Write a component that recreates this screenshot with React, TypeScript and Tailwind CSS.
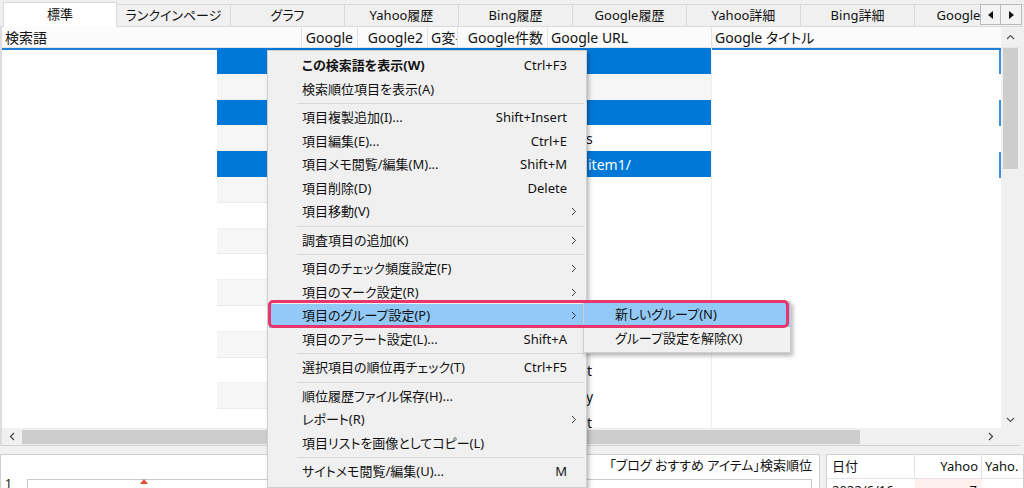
import React from 'react';

type MenuEntry =
  | { label: string; shortcut?: string; sub?: boolean; bold?: boolean; active?: boolean }
  | 'sep';

const tabs: string[] = [
  '標準', 'ランクインページ', 'グラフ', 'Yahoo履歴', 'Bing履歴',
  'Google履歴', 'Yahoo詳細', 'Bing詳細', 'Google詳細',
];

const menu: MenuEntry[] = [
  { label: 'この検索語を表示(W)', shortcut: 'Ctrl+F3', bold: true },
  { label: '検索順位項目を表示(A)' },
  'sep',
  { label: '項目複製追加(I)...', shortcut: 'Shift+Insert' },
  { label: '項目編集(E)...', shortcut: 'Ctrl+E' },
  { label: '項目メモ閲覧/編集(M)...', shortcut: 'Shift+M' },
  { label: '項目削除(D)', shortcut: 'Delete' },
  { label: '項目移動(V)', sub: true },
  'sep',
  { label: '調査項目の追加(K)', sub: true },
  'sep',
  { label: '項目のチェック頻度設定(F)', sub: true },
  { label: '項目のマーク設定(R)', sub: true },
  { label: '項目のグループ設定(P)', sub: true, active: true },
  { label: '項目のアラート設定(L)...', shortcut: 'Shift+A' },
  'sep',
  { label: '選択項目の順位再チェック(T)', shortcut: 'Ctrl+F5' },
  'sep',
  { label: '順位履歴ファイル保存(H)...' },
  { label: 'レポート(R)', sub: true },
  { label: '項目リストを画像としてコピー(L)' },
  'sep',
  { label: 'サイトメモ閲覧/編集(U)...', shortcut: 'M' },
];

// the bits of the url column that peek out right of the menu
const rowText: Record<number, { text: string; pl: string }> = {
  3: { text: 's', pl: 'pl-[186px]' },
  4: { text: 'item1/', pl: 'pl-[188px]' },
  12: { text: 't', pl: 'pl-[187px]' },
  13: { text: 'y', pl: 'pl-[186px]' },
  14: { text: 't', pl: 'pl-[187px]' },
};

function Chevron() {
  return (
    <svg width="6" height="9" viewBox="0 0 6 9" className="shrink-0">
      <path d="M1 1l3.5 3.5L1 8" fill="none" stroke="#333" strokeWidth="1" />
    </svg>
  );
}

function ContextMenu() {
  return (
    <div className="absolute left-[267px] top-[50px] w-[320px] bg-[#f0f0f0] border border-[#cfcfcf] pt-[3px] pb-[3px] shadow-[2px_3px_4px_rgba(0,0,0,0.28)] text-[13px] text-[#111]">
      {menu.map((m, i) =>
        m === 'sep' ? (
          <div key={i} className="h-[5px] flex items-center pl-[29px] pr-[2px]">
            <div className="h-px w-full bg-[#d7d7d7]" />
          </div>
        ) : (
          <div
            key={i}
            className={`h-[23.5px] flex items-center pl-[33px] pr-[8px] mx-[1px] ${
              m.active ? 'bg-[#92c9f6]' : ''
            }`}
          >
            <span className={`flex-1 whitespace-nowrap ${m.bold ? 'font-bold' : ''}`}>{m.label}</span>
            {m.shortcut && <span className="pr-[10px] whitespace-nowrap">{m.shortcut}</span>}
            {m.sub && <Chevron />}
          </div>
        )
      )}
    </div>
  );
}

function SubMenu() {
  return (
    <div className="absolute left-[583px] top-[301px] w-[208px] bg-[#f0f0f0] border border-[#cfcfcf] pt-[1px] pb-[1px] shadow-[2px_3px_4px_rgba(0,0,0,0.28)] text-[13px] text-[#111]">
      <div className="h-[24px] flex items-center pl-[31px] bg-[#92c9f6]">新しいグループ(N)</div>
      <div className="h-[24px] flex items-center pl-[31px]">グループ設定を解除(X)</div>
    </div>
  );
}

function TabBar() {
  return (
    <div className="h-[27px] flex items-end bg-[#f0f0f0] pl-[3px] border-b border-[#dadada] relative">
      {tabs.map((t, i) => (
        <div
          key={t}
          className={`shrink-0 w-[114px] flex items-center justify-center text-[13px] text-[#111] border-t border-r border-[#d9d9d9] ${
            i === 0
              ? 'h-[25px] bg-white border-l -mb-px'
              : 'h-[22px] bg-[#f0f0f0]'
          }`}
        >
          {t}
        </div>
      ))}
      <div className="absolute right-[2px] top-[4px] flex bg-[#f0f0f0]">
        <div className="w-[21px] h-[21px] border border-[#b9b9b9] bg-[#f3f3f3] flex items-center justify-center">
          <svg width="6" height="8" viewBox="0 0 6 8"><path d="M5 0v8L0 4z" fill="#111" /></svg>
        </div>
        <div className="w-[21px] h-[21px] border border-l-0 border-[#b9b9b9] bg-[#f3f3f3] flex items-center justify-center">
          <svg width="6" height="8" viewBox="0 0 6 8"><path d="M1 0v8l5-4z" fill="#111" /></svg>
        </div>
      </div>
    </div>
  );
}

function Header() {
  return (
    <div className="h-[21px] flex text-[14px] text-[#111] bg-[#fbfbfb] border-b border-[#e6e6e6]">
      <div className="w-[300px] pl-[3px] border-r border-[#e3e3e3] flex items-center">検索語</div>
      <div className="w-[56px] pr-[4px] border-r border-[#e3e3e3] flex items-center justify-end">Google</div>
      <div className="w-[70px] pr-[4px] border-r border-[#e3e3e3] flex items-center justify-end">Google2</div>
      <div className="w-[30px] pl-[3px] border-r border-[#e3e3e3] flex items-center overflow-hidden whitespace-nowrap">G変<span className="text-[9px] self-end mb-[4px]">..</span></div>
      <div className="w-[90px] pr-[4px] border-r border-[#e3e3e3] flex items-center justify-end whitespace-nowrap">Google件数</div>
      <div className="w-[164px] pl-[3px] border-r border-[#e3e3e3] flex items-center whitespace-nowrap">Google URL</div>
      <div className="flex-1 pl-[3px] flex items-center whitespace-nowrap">Google タイトル</div>
      <div className="w-[19px] flex items-center justify-center bg-[#f0f0f0]">
        <svg width="9" height="6" viewBox="0 0 9 6"><path d="M1 5l3.5-3.5L8 5" fill="none" stroke="#555" strokeWidth="1.2" /></svg>
      </div>
    </div>
  );
}

function Rows() {
  const rows = Array.from({ length: 15 }, (_, i) => i);
  return (
    <div className="w-[495px] overflow-hidden">
      {rows.map((i) => {
        const sel = i === 0 || i === 2 || i === 4;
        const t = rowText[i];
        return (
          <div key={i} className={`h-[25.8px] flex text-[14px] ${sel ? 'bg-[#0078d7] text-white' : 'text-[#111]'}`}>
            <div className={`w-[183px] ${sel ? '' : i % 2 === 1 ? 'bg-[#f6f6f6] border-b border-[#ecece4]' : 'border-b border-[#f1f1ea]'}`} />
            <div className={`flex-1 flex items-center overflow-hidden border-r border-[#eeeeee] ${sel ? '' : i === 1 ? 'bg-[#f6f6f6]' : ''}`}>
              {t && <div className={`${t.pl} whitespace-nowrap`}>{t.text}</div>}
            </div>
          </div>
        );
      })}
    </div>
  );
}

function ListArea() {
  return (
    <div className="border-l-2 border-[#dcdcdc] mr-[4px]">
      <Header />
      <div className="h-[380px] flex bg-white">
        <div className="w-[215px] border-t-2 border-[#1f7fd8]" />
        <Rows />
        <div className="flex-1 border-t-2 border-[#1f7fd8] flex">
          <div className="flex-1" />
          <div className="w-[2px] flex flex-col">
            <div className="h-[24px] bg-[#3b8fdc]" />
            <div className="h-[26px]" />
            <div className="h-[26px] bg-[#3b8fdc]" />
            <div className="h-[26px]" />
            <div className="h-[26px] bg-[#3b8fdc]" />
          </div>
        </div>
        <div className="w-[19px] bg-[#f0f0f0] flex flex-col px-[2px]">
          <div className="h-[121px] bg-[#cdcdcd]" />
          <div className="flex-1" />
          <div className="h-[16px] flex items-center justify-center">
            <svg width="9" height="6" viewBox="0 0 9 6"><path d="M1 1l3.5 3.5L8 1" fill="none" stroke="#555" strokeWidth="1.2" /></svg>
          </div>
        </div>
      </div>
      <div className="h-[18px] flex items-center bg-[#f0f0f0] border-b border-[#d0d0d0]">
        <div className="w-[20px] flex items-center justify-center">
          <svg width="6" height="9" viewBox="0 0 6 9"><path d="M5 1L1.5 4.5 5 8" fill="none" stroke="#444" strokeWidth="1.2" /></svg>
        </div>
        <div className="w-[838px] h-[14px] bg-[#cdcdcd]" />
        <div className="flex-1" />
        <div className="w-[20px] flex items-center justify-center">
          <svg width="6" height="9" viewBox="0 0 6 9"><path d="M1 1l3.5 3.5L1 8" fill="none" stroke="#444" strokeWidth="1.2" /></svg>
        </div>
        <div className="w-[19px] h-full bg-[#f0f0f0]" />
      </div>
    </div>
  );
}

function BottomPanels() {
  return (
    <div className="flex gap-[6px] pt-[8px] text-[13px] text-[#111]">
      <div className="w-[820px] h-[40px] bg-white border border-[#cfcfcf]">
        <div className="h-[22px] flex items-center justify-end pr-[7px]">「ブログ おすすめ アイテム」検索順位</div>
        <div className="flex">
          <div className="w-[26px] pl-[4px] text-[12px] leading-[12px] pt-[1px]">1</div>
          <div className="relative w-[785px] h-[20px] mt-[2px] border border-[#c9c9c9]">
            <svg width="8" height="5" viewBox="0 0 8 5" className="absolute left-[112px] -top-[1px]">
              <path d="M4 0l4 5H0z" fill="#e0523a" />
            </svg>
          </div>
        </div>
      </div>
      <div className="flex-1 h-[40px] bg-white border border-[#cfcfcf]">
        <div className="h-[24px] flex items-center border-b border-[#e4e4e4]">
          <div className="w-[88px] pl-[5px] border-r border-[#e3e3e3] h-full flex items-center">日付</div>
          <div className="w-[67px] pr-[3px] border-r border-[#e3e3e3] h-full flex items-center justify-end">Yahoo</div>
          <div className="flex-1 pl-[3px] whitespace-nowrap overflow-hidden">Yaho.</div>
        </div>
        <div className="h-[20px] flex">
          <div className="w-[88px] pl-[5px] pt-[2px]">2022/6/16</div>
          <div className="w-[67px] pr-[5px] pt-[2px] text-right bg-[#fdf0ed]">7</div>
        </div>
      </div>
    </div>
  );
}

export default function App() {
  return (
    <div className="relative w-[1024px] h-[488px] overflow-hidden bg-[#f0f0f0] font-['Noto_Sans','Noto_Sans_CJK_JP',sans-serif] [font-feature-settings:'palt']">
      <TabBar />
      <ListArea />
      <BottomPanels />
      <ContextMenu />
      <SubMenu />
      <div className="absolute left-[268px] top-[300px] w-[521px] h-[28px] border-[3px] border-[#e8356b] rounded-[5px] pointer-events-none" />
    </div>
  );
}
